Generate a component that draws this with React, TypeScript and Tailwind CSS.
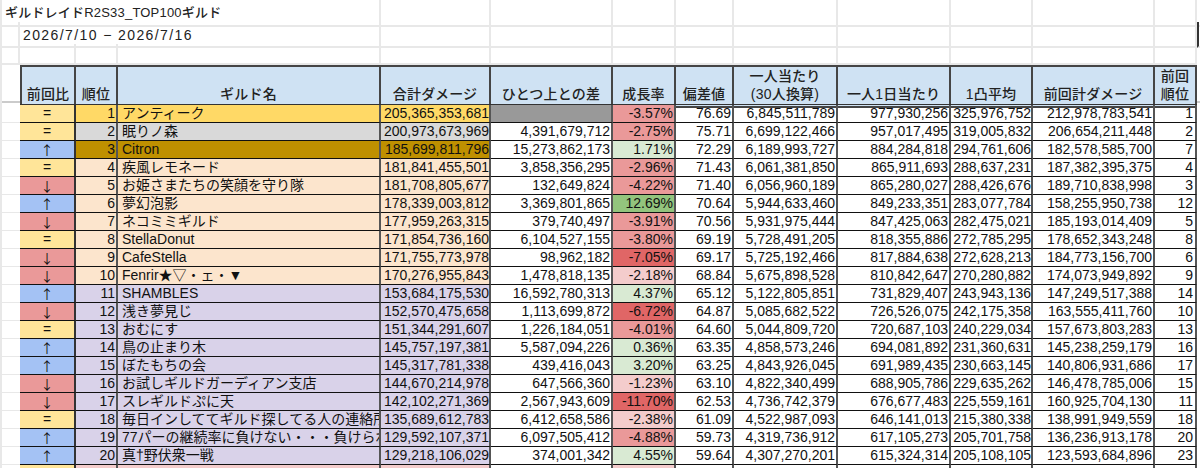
import React from 'react';

const gridCols = 'grid grid-cols-[20px_56px_42px_263px_110px_122px_63px_58px_104px_113px_82px_122px_42px_3px]';

type Row = {
  change: string;
  rank: number;
  name: string;
  total: string;
  diff: string;
  growth: string;
  growthBg: string;
  dev: string;
  perMember: string;
  perDay: string;
  perHit: string;
  prevTotal: string;
  prevRank: string;
};

const RED = 'bg-[#ea9999]';
const DEEP = 'bg-[#e06666]';
const PALE = 'bg-[#f4cccc]';
const GREEN = 'bg-[#d9ead3]';
const STRONG = 'bg-[#93c47d]';

const rows: Row[] = [
  { change: '=', rank: 1, name: 'アンティーク', total: '205,365,353,681', diff: '', growth: '-3.57%', growthBg: RED, dev: '76.69', perMember: '6,845,511,789', perDay: '977,930,256', perHit: '325,976,752', prevTotal: '212,978,783,541', prevRank: '1' },
  { change: '=', rank: 2, name: '眠りノ森', total: '200,973,673,969', diff: '4,391,679,712', growth: '-2.75%', growthBg: RED, dev: '75.71', perMember: '6,699,122,466', perDay: '957,017,495', perHit: '319,005,832', prevTotal: '206,654,211,448', prevRank: '2' },
  { change: '↑', rank: 3, name: 'Citron', total: '185,699,811,796', diff: '15,273,862,173', growth: '1.71%', growthBg: GREEN, dev: '72.29', perMember: '6,189,993,727', perDay: '884,284,818', perHit: '294,761,606', prevTotal: '182,578,585,700', prevRank: '7' },
  { change: '=', rank: 4, name: '疾風レモネード', total: '181,841,455,501', diff: '3,858,356,295', growth: '-2.96%', growthBg: RED, dev: '71.43', perMember: '6,061,381,850', perDay: '865,911,693', perHit: '288,637,231', prevTotal: '187,382,395,375', prevRank: '4' },
  { change: '↓', rank: 5, name: 'お姫さまたちの笑顔を守り隊', total: '181,708,805,677', diff: '132,649,824', growth: '-4.22%', growthBg: RED, dev: '71.40', perMember: '6,056,960,189', perDay: '865,280,027', perHit: '288,426,676', prevTotal: '189,710,838,998', prevRank: '3' },
  { change: '↑', rank: 6, name: '夢幻泡影', total: '178,339,003,812', diff: '3,369,801,865', growth: '12.69%', growthBg: STRONG, dev: '70.64', perMember: '5,944,633,460', perDay: '849,233,351', perHit: '283,077,784', prevTotal: '158,255,950,738', prevRank: '12' },
  { change: '↓', rank: 7, name: 'ネコミミギルド', total: '177,959,263,315', diff: '379,740,497', growth: '-3.91%', growthBg: RED, dev: '70.56', perMember: '5,931,975,444', perDay: '847,425,063', perHit: '282,475,021', prevTotal: '185,193,014,409', prevRank: '5' },
  { change: '=', rank: 8, name: 'StellaDonut', total: '171,854,736,160', diff: '6,104,527,155', growth: '-3.80%', growthBg: RED, dev: '69.19', perMember: '5,728,491,205', perDay: '818,355,886', perHit: '272,785,295', prevTotal: '178,652,343,248', prevRank: '8' },
  { change: '↓', rank: 9, name: 'CafeStella', total: '171,755,773,978', diff: '98,962,182', growth: '-7.05%', growthBg: DEEP, dev: '69.17', perMember: '5,725,192,466', perDay: '817,884,638', perHit: '272,628,213', prevTotal: '184,773,156,700', prevRank: '6' },
  { change: '↓', rank: 10, name: 'Fenrir★▽・ェ・▼', total: '170,276,955,843', diff: '1,478,818,135', growth: '-2.18%', growthBg: PALE, dev: '68.84', perMember: '5,675,898,528', perDay: '810,842,647', perHit: '270,280,882', prevTotal: '174,073,949,892', prevRank: '9' },
  { change: '↑', rank: 11, name: 'SHAMBLES', total: '153,684,175,530', diff: '16,592,780,313', growth: '4.37%', growthBg: GREEN, dev: '65.12', perMember: '5,122,805,851', perDay: '731,829,407', perHit: '243,943,136', prevTotal: '147,249,517,388', prevRank: '14' },
  { change: '↓', rank: 12, name: '浅き夢見じ', total: '152,570,475,658', diff: '1,113,699,872', growth: '-6.72%', growthBg: DEEP, dev: '64.87', perMember: '5,085,682,522', perDay: '726,526,075', perHit: '242,175,358', prevTotal: '163,555,411,760', prevRank: '10' },
  { change: '=', rank: 13, name: 'おむにす', total: '151,344,291,607', diff: '1,226,184,051', growth: '-4.01%', growthBg: RED, dev: '64.60', perMember: '5,044,809,720', perDay: '720,687,103', perHit: '240,229,034', prevTotal: '157,673,803,283', prevRank: '13' },
  { change: '↑', rank: 14, name: '鳥の止まり木', total: '145,757,197,381', diff: '5,587,094,226', growth: '0.36%', growthBg: GREEN, dev: '63.35', perMember: '4,858,573,246', perDay: '694,081,892', perHit: '231,360,631', prevTotal: '145,238,259,179', prevRank: '16' },
  { change: '↑', rank: 15, name: 'ぼたもちの会', total: '145,317,781,338', diff: '439,416,043', growth: '3.20%', growthBg: GREEN, dev: '63.25', perMember: '4,843,926,045', perDay: '691,989,435', perHit: '230,663,145', prevTotal: '140,806,931,686', prevRank: '17' },
  { change: '↓', rank: 16, name: 'お試しギルドガーディアン支店', total: '144,670,214,978', diff: '647,566,360', growth: '-1.23%', growthBg: PALE, dev: '63.10', perMember: '4,822,340,499', perDay: '688,905,786', perHit: '229,635,262', prevTotal: '146,478,785,006', prevRank: '15' },
  { change: '↓', rank: 17, name: 'スレギルドぷに天', total: '142,102,271,369', diff: '2,567,943,609', growth: '-11.70%', growthBg: DEEP, dev: '62.53', perMember: '4,736,742,379', perDay: '676,677,483', perHit: '225,559,161', prevTotal: '160,925,704,130', prevRank: '11' },
  { change: '=', rank: 18, name: '毎日インしててギルド探してる人の連絡所', total: '135,689,612,783', diff: '6,412,658,586', growth: '-2.38%', growthBg: PALE, dev: '61.09', perMember: '4,522,987,093', perDay: '646,141,013', perHit: '215,380,338', prevTotal: '138,991,949,559', prevRank: '18' },
  { change: '↑', rank: 19, name: '77パーの継続率に負けない・・・負けられない', total: '129,592,107,371', diff: '6,097,505,412', growth: '-4.88%', growthBg: RED, dev: '59.73', perMember: '4,319,736,912', perDay: '617,105,273', perHit: '205,701,758', prevTotal: '136,236,913,178', prevRank: '20' },
  { change: '↑', rank: 20, name: '真†野伏衆一戦', total: '129,218,106,029', diff: '374,001,342', growth: '4.55%', growthBg: GREEN, dev: '59.64', perMember: '4,307,270,201', perDay: '615,324,314', perHit: '205,108,105', prevTotal: '123,593,684,896', prevRank: '23' },
];

const changeBg = (c: string) => (c === '=' ? 'bg-[#ffe599]' : c === '↑' ? 'bg-[#a4c2f4]' : 'bg-[#ea9999]');

// the rank, name and total cells share a colour that goes by rank band
const bandBg = (rank: number) => {
  if (rank === 1) return 'bg-[#ffd966]';
  if (rank === 2) return 'bg-[#d9d9d9]';
  if (rank === 3) return 'bg-[#bf9000]';
  if (rank <= 10) return 'bg-[#fce5cd]';
  return 'bg-[#d9d2e9]';
};

const Blank: React.FC<{ className?: string }> = ({ className = '' }) => (
  <div className={`border-r-2 border-b-2 border-[#e8e8e8] ${className}`} />
);

const Head: React.FC<{ children: React.ReactNode; className?: string }> = ({ children, className = '' }) => (
  <div className={`flex flex-col items-center justify-end border-r-2 border-[#454545] bg-[#cfe2f3] pb-[3px] text-[14px] leading-[18px] font-medium tracking-[0.2px] text-[#222] ${className}`}>
    {children}
  </div>
);

const Num: React.FC<{ children?: React.ReactNode; className?: string }> = ({ children, className = '' }) => (
  <div className={`overflow-hidden border-r-2 border-b border-[#555] border-b-[#111] text-right whitespace-nowrap ${className}`}>{children}</div>
);

const DataRow: React.FC<{ row: Row }> = ({ row }) => {
  const band = bandBg(row.rank);
  const arrow = row.change !== '=';
  return (
    <div className={`${gridCols} h-[18px] text-[14px] leading-[16px] text-[#111]`}>
      <div className="border-b border-l-2 border-[#e8e8e8]" />
      <div className={`overflow-hidden border-r-2 border-b border-[#333] border-b-[#111] text-center ${arrow ? "font-['Noto_Sans_CJK_JP',sans-serif] text-[13px] leading-[18px]" : ''} ${changeBg(row.change)}`}>
        {row.change}
      </div>
      <Num className={`pr-[1px] ${band}`}>{row.rank}</Num>
      <div className={`overflow-hidden border-r-2 border-b border-[#555] border-b-[#111] pl-[4px] whitespace-nowrap ${band}`}>{row.name}</div>
      <Num className={band}>{row.total}</Num>
      <Num className={`pr-[1px] ${row.rank === 1 ? 'bg-[#999999]' : ''}`}>{row.diff}</Num>
      <Num className={`pr-[1px] ${row.growthBg}`}>{row.growth}</Num>
      <Num className="pr-[1px]">{row.dev}</Num>
      <Num className="pr-[1px]">{row.perMember}</Num>
      <Num className="pr-[1px]">{row.perDay}</Num>
      <Num className="pr-[0px]">{row.perHit}</Num>
      <Num className="pr-[1px]">{row.prevTotal}</Num>
      <Num className="pr-[2px]">{row.prevRank}</Num>
    </div>
  );
};

export default function App() {
  return (
    <div className="h-[468px] w-[1200px] overflow-hidden bg-white font-['Liberation_Sans','Noto_Sans_CJK_JP',sans-serif]">
      {/* sheet title rows */}
      <div className={`${gridCols} h-[22px]`}>
        <div className="col-span-4 border-r-2 border-b-2 border-l-2 border-[#e8e8e8] pl-[3px] text-[13px] leading-[25px] font-medium tracking-[0.2px] whitespace-nowrap text-[#222]">
          ギルドレイドR2S33_TOP100ギルド
        </div>
        <Blank /><Blank /><Blank /><Blank /><Blank /><Blank /><Blank /><Blank /><Blank />
        <div className="border-b-2 border-[#e8e8e8]" />
      </div>
      <div className={`${gridCols} h-[22px]`}>
        <Blank className="border-l-2" />
        <div className="col-span-3 border-r-2 border-b-2 border-[#e8e8e8] pt-[2px] pl-[3px] text-[14px] leading-[22px] tracking-[1.4px] whitespace-nowrap text-[#222]">
          2026/7/10 − 2026/7/16
        </div>
        <Blank /><Blank /><Blank /><Blank /><Blank /><Blank /><Blank /><Blank /><Blank />
        <div className="border-b-2 border-l-2 border-b-[#e8e8e8] border-l-[#333]" />
      </div>
      <div className={`${gridCols} h-[21px]`}>
        <Blank className="border-l-2" />
        <Blank /><Blank /><Blank /><Blank /><Blank /><Blank /><Blank /><Blank /><Blank /><Blank /><Blank /><Blank />
      </div>

      {/* header */}
      <div className={`${gridCols} h-[35px]`}>
        <div className="border-l-2 border-[#e8e8e8]" />
        <div className="col-span-12 grid grid-cols-subgrid border-y-2 border-l-2 border-[#454545]">
          <Head>前回比</Head>
          <Head>順位</Head>
          <Head>ギルド名</Head>
          <Head>合計ダメージ</Head>
          <Head>ひとつ上との差</Head>
          <Head>成長率</Head>
          <Head>偏差値</Head>
          <Head>
            <span>一人当たり</span>
            <span>(30人換算)</span>
          </Head>
          <Head>一人1日当たり</Head>
          <Head>1凸平均</Head>
          <Head>前回計ダメージ</Head>
          <Head>
            <span>前回</span>
            <span>順位</span>
          </Head>
        </div>
      </div>

      {/* frozen pane divider */}
      <div className="mt-[1px] h-[2px] bg-[#cbcbcb]" />
      <div className={`${gridCols} mt-[1px] h-[1px]`}>
        <div />
        <div className="col-span-12 bg-[#333]" />
      </div>

      {/* ranking rows */}
      {rows.map(row => (
        <DataRow key={row.rank} row={row} />
      ))}

      {/* next row, cut off by the bottom of the shot */}
      <div className={`${gridCols} h-[18px]`}>
        <div className="border-l-2 border-[#e8e8e8]" />
        <div className="border-r-2 border-[#333] bg-[#ffe599]" />
        <div className="border-r-2 border-[#555] bg-[#f4cccc]" />
        <div className="border-r-2 border-[#555] bg-[#f4cccc]" />
        <div className="border-r-2 border-[#555] bg-[#f4cccc]" />
        <div className="border-r-2 border-[#555]" />
        <div className="border-r-2 border-[#555] bg-[#f4cccc]" />
        <div className="border-r-2 border-[#555]" />
        <div className="border-r-2 border-[#555]" />
        <div className="border-r-2 border-[#555]" />
        <div className="border-r-2 border-[#555]" />
        <div className="border-r-2 border-[#555]" />
        <div className="border-r-2 border-[#555]" />
      </div>
    </div>
  );
}
